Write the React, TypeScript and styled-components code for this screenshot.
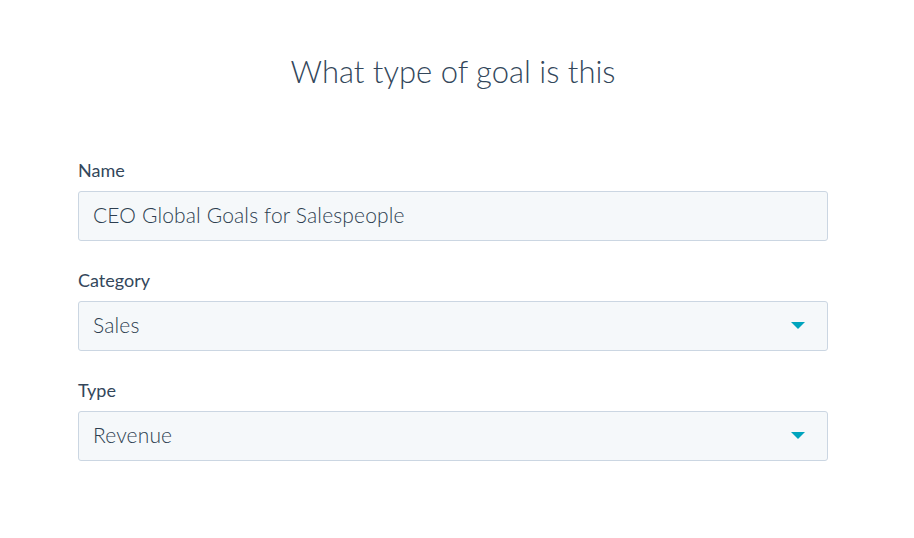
import React from "react";
import styled, { createGlobalStyle } from "styled-components";

const GlobalStyle = createGlobalStyle`
  body {
    margin: 0;
    background: #ffffff;
    font-family: "Lato", "Open Sans", sans-serif;
    color: #33475b;
  }
`;

const Page = styled.div`
  width: 906px;
  height: 538px;
  display: flex;
  flex-direction: column;
  align-items: center;
  padding-top: 52px;
  box-sizing: border-box;
`;

const Title = styled.h1`
  margin: 0 0 69px;
  font-size: 31px;
  font-weight: 300;
  line-height: 38px;
  color: #33475b;
`;

const Form = styled.div`
  width: 750px;
  display: flex;
  flex-direction: column;
  gap: 28px;
`;

const Field = styled.div`
  display: flex;
  flex-direction: column;
`;

const Label = styled.label`
  font-size: 18px;
  line-height: 22px;
  margin-bottom: 10px;
  color: #33475b;
`;

const Box = styled.div`
  position: relative;
  height: 50px;
  box-sizing: border-box;
  border: 1px solid #cbd6e2;
  border-radius: 3px;
  background: #f5f8fa;
  display: flex;
  align-items: center;
  padding: 0 14px 3px;
  font-size: 21px;
  font-weight: 300;
  letter-spacing: 0.15px;
  color: #2d3e50;
`;

const Caret = styled.span`
  position: absolute;
  right: 22px;
  top: 50%;
  margin-top: -4px;
  width: 0;
  height: 0;
  border-left: 7px solid transparent;
  border-right: 7px solid transparent;
  border-top: 7px solid #00a4bd;
`;

interface FieldData {
  label: string;
  value: string;
  select?: boolean;
}

const fields: FieldData[] = [
  { label: "Name", value: "CEO Global Goals for Salespeople" },
  { label: "Category", value: "Sales", select: true },
  { label: "Type", value: "Revenue", select: true },
];

export default function App() {
  return (
    <>
      <GlobalStyle />
      <Page>
        <Title>What type of goal is this</Title>
        <Form>
          {fields.map((f) => (
            <Field key={f.label}>
              <Label>{f.label}</Label>
              <Box>
                {f.value}
                {f.select && <Caret />}
              </Box>
            </Field>
          ))}
        </Form>
      </Page>
    </>
  );
}
